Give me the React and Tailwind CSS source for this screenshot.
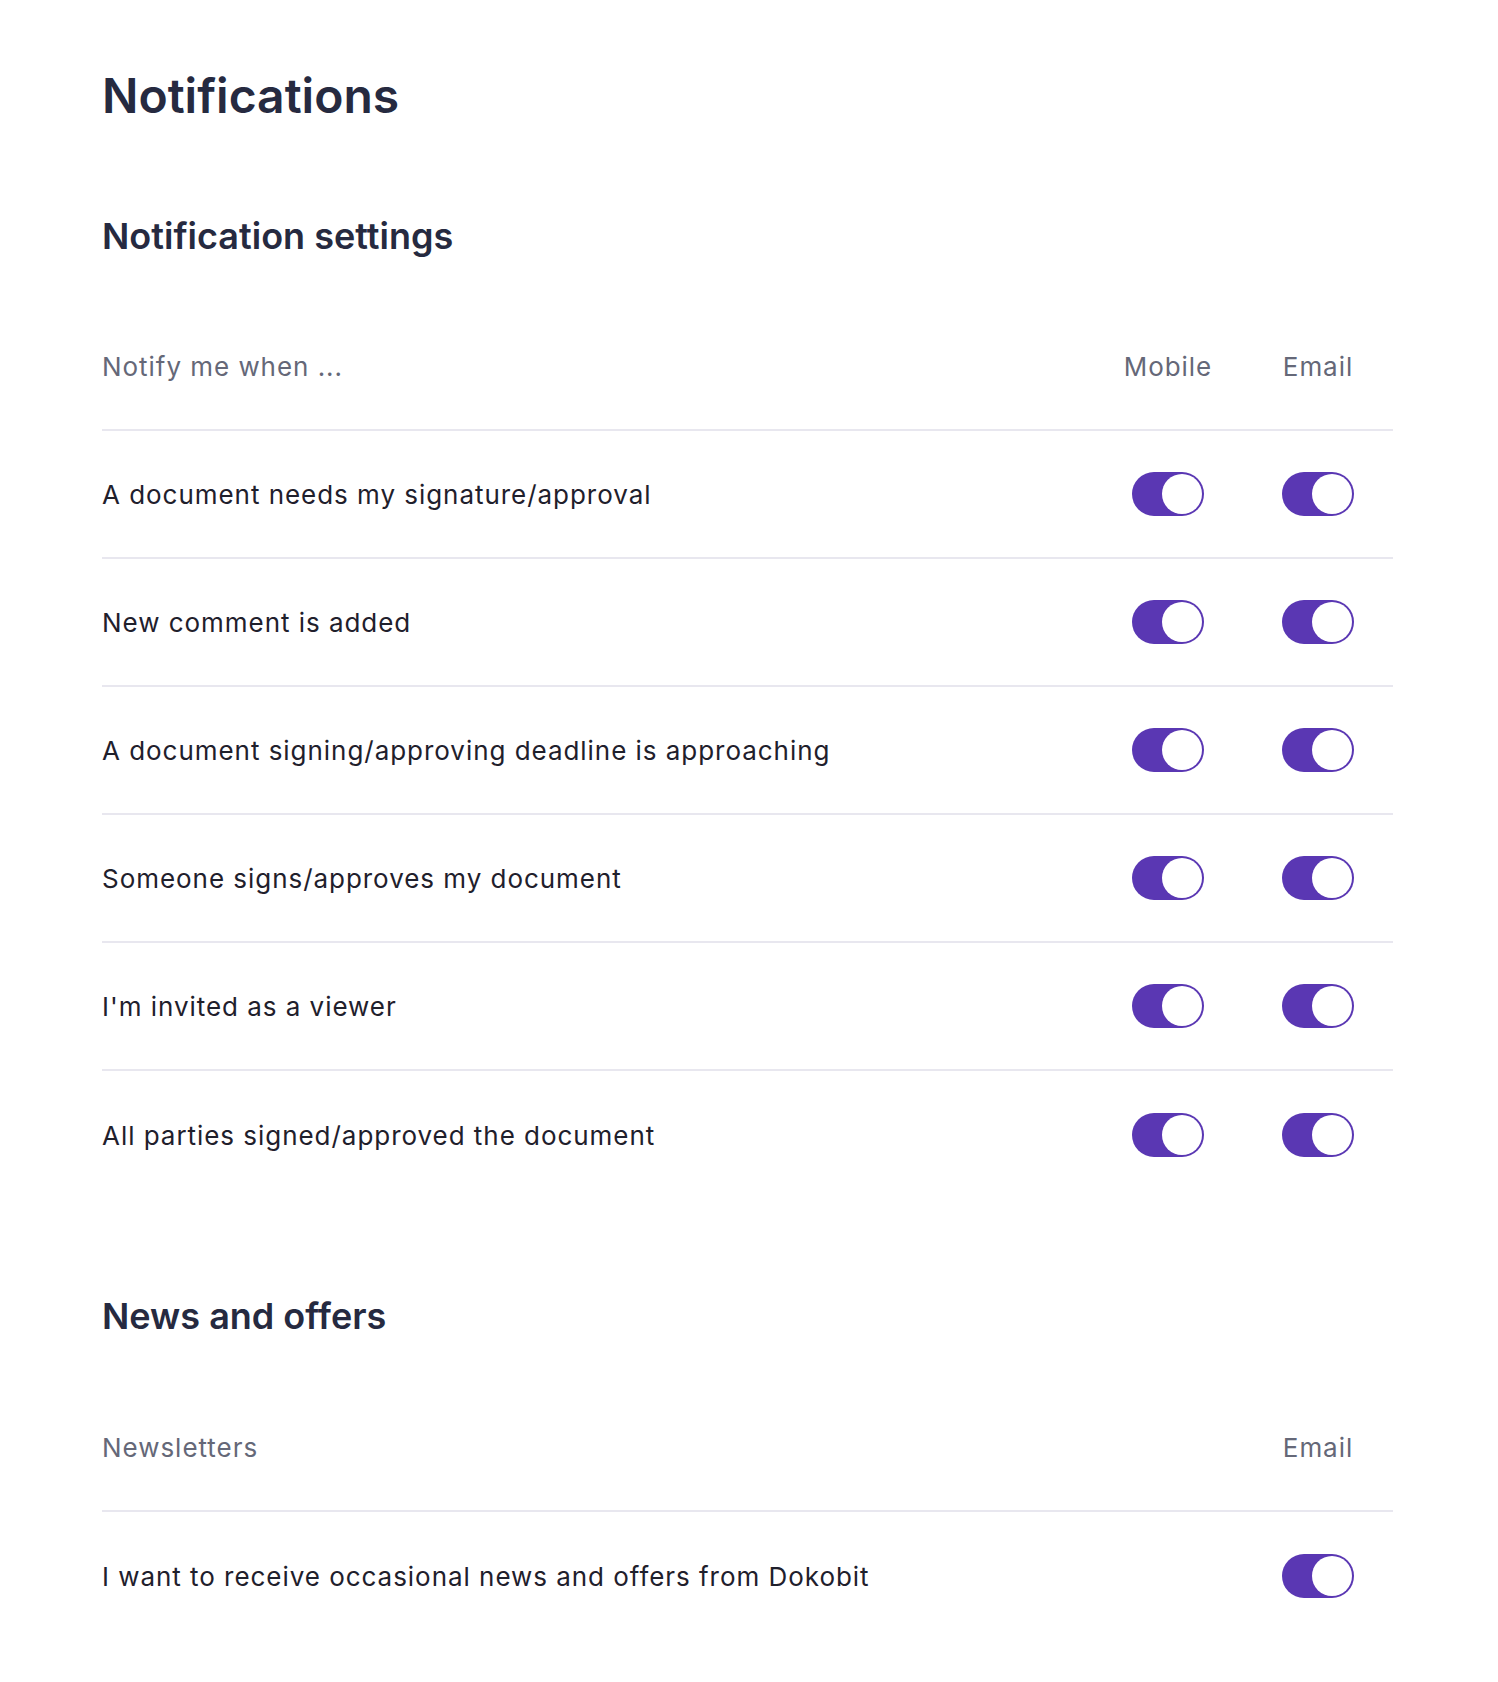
import { useState } from 'react'

const events = [
  'A document needs my signature/approval',
  'New comment is added',
  'A document signing/approving deadline is approaching',
  'Someone signs/approves my document',
  "I'm invited as a viewer",
  'All parties signed/approved the document',
]

function Toggle({ on, onChange }) {
  return (
    <button
      type="button"
      onClick={onChange}
      className={`relative w-[72px] h-[44px] rounded-full transition-colors ${on ? 'bg-[#5a37b3]' : 'bg-[#d9d8e3]'}`}
    >
      <span
        className={`absolute top-[2px] w-[40px] h-[40px] rounded-full bg-white transition-all ${on ? 'left-[30px]' : 'left-[2px]'}`}
      />
    </button>
  )
}

function Cell({ children }) {
  return <div className="w-[150px] flex justify-center">{children}</div>
}

export default function App() {
  const [mobile, setMobile] = useState(events.map(() => true))
  const [email, setEmail] = useState(events.map(() => true))
  const [news, setNews] = useState(true)

  const flip = (list, set, i) => set(list.map((v, j) => (j === i ? !v : v)))

  return (
    <div className="min-h-screen bg-white pl-[102px] pr-[105px] pt-[67px] pb-[43px] font-['Inter',sans-serif]">
      <h1 className="text-[48px] leading-[58px] font-semibold text-[#262a40]">Notifications</h1>

      <h2 className="mt-[89px] text-[36px] leading-[44px] font-semibold text-[#262a40]">Notification settings</h2>

      <div className="mt-[45px] tracking-[0.06em]">
        <div className="flex items-center h-[128px] border-b-2 border-[#e8e7ef] text-[26px] text-[#656878]">
          <div className="flex-1">Notify me when ...</div>
          <Cell>Mobile</Cell>
          <Cell>Email</Cell>
        </div>
        {events.map((label, i) => (
          <div
            key={label}
            className={`flex items-center h-[128px] text-[26px] text-[#1f202c] ${i < events.length - 1 ? 'border-b-2 border-[#e8e7ef]' : ''}`}
          >
            <div className="flex-1">{label}</div>
            <Cell>
              <Toggle on={mobile[i]} onChange={() => flip(mobile, setMobile, i)} />
            </Cell>
            <Cell>
              <Toggle on={email[i]} onChange={() => flip(email, setEmail, i)} />
            </Cell>
          </div>
        ))}
      </div>

      <h2 className="mt-[95px] text-[36px] leading-[44px] font-semibold text-[#262a40]">News and offers</h2>

      <div className="mt-[46px] tracking-[0.06em]">
        <div className="flex items-center h-[128px] border-b-2 border-[#e8e7ef] text-[26px] text-[#656878]">
          <div className="flex-1">Newsletters</div>
          <Cell>Email</Cell>
        </div>
        <div className="flex items-center h-[128px] text-[26px] text-[#1f202c]">
          <div className="flex-1">I want to receive occasional news and offers from Dokobit</div>
          <Cell>
            <Toggle on={news} onChange={() => setNews(!news)} />
          </Cell>
        </div>
      </div>
    </div>
  )
}
